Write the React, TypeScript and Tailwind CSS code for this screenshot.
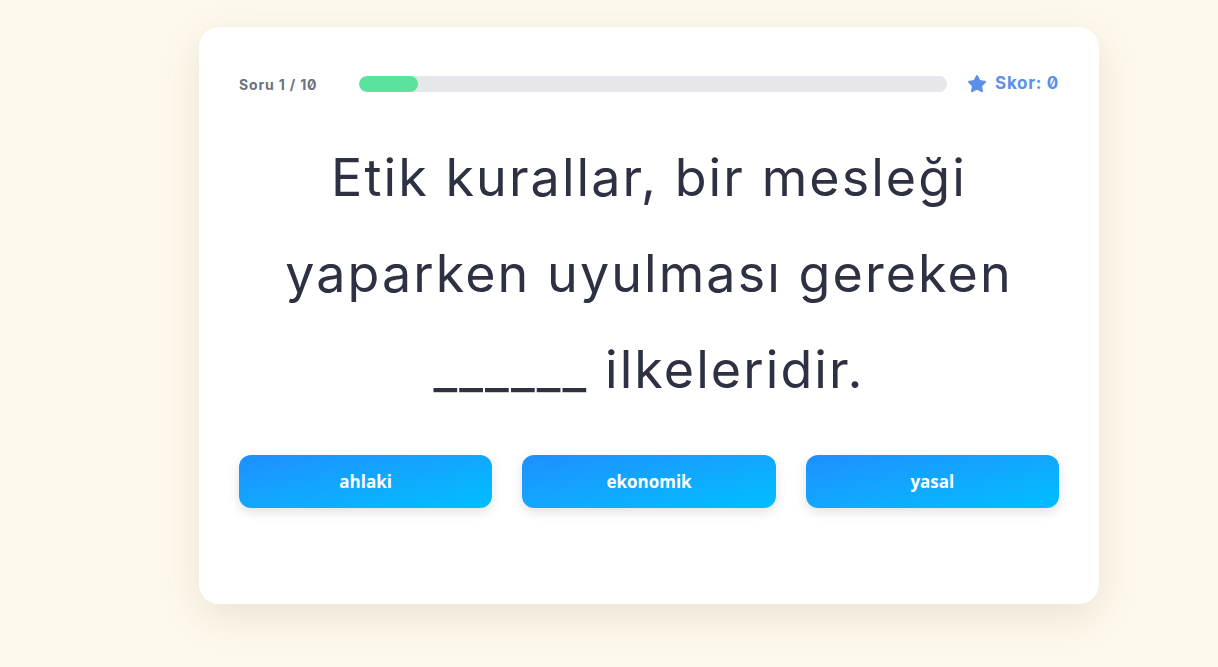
import { Star } from 'lucide-react';

const options = ['ahlaki', 'ekonomik', 'yasal'];

export default function App() {
  const current = 1;
  const total = 10;
  const score = 0;

  return (
    <div className="min-h-[667px] w-full bg-[#fef9ed] pl-[199px] pt-[27px]">
      <div className="w-[900px] h-[577px] bg-white rounded-[20px] shadow-[0_12px_40px_rgba(120,100,60,0.15)] px-10 pt-[40px]">
        <div className="flex items-center h-[34px]" style={{ fontFamily: 'Inter, sans-serif' }}>
          <span className="w-[120px] text-[14px] font-bold tracking-[0.06em] text-[#6b7280] slashed-zero">
            Soru {current} / {total}
          </span>
          <div className="flex-1 h-[16px] bg-[#e5e7eb] rounded-full overflow-hidden">
            <div className="h-full bg-[#5be39e] rounded-full" style={{ width: `${(current / total) * 100}%` }} />
          </div>
          <div className="flex items-center gap-2 ml-5 text-[#5b8fe8]">
            <Star className="w-5 h-5 fill-[#5b8fe8]" strokeWidth={1.5} />
            <span className="text-[17px] font-bold tracking-[0.04em] slashed-zero">Skor: {score}</span>
          </div>
        </div>

        <div
          className="mt-[29px] px-8 text-center text-[52px] leading-[96px] tracking-[0.04em] text-[#2d3142]"
          style={{ fontFamily: 'Inter, sans-serif' }}
        >
          Etik kurallar, bir mesleği yaparken uyulması gereken ______ ilkeleridir.
        </div>

        <div className="grid grid-cols-3 gap-[30px] mt-[37px]">
          {options.map((o) => (
            <button
              key={o}
              className="h-[53px] rounded-[12px] bg-linear-to-br from-[#1e8fff] to-[#00bfff] text-white text-[17px] font-bold shadow-[0_4px_12px_rgba(0,0,0,0.12)]"
              style={{ fontFamily: '"Open Sans", sans-serif' }}
            >
              {o}
            </button>
          ))}
        </div>
      </div>
    </div>
  );
}
